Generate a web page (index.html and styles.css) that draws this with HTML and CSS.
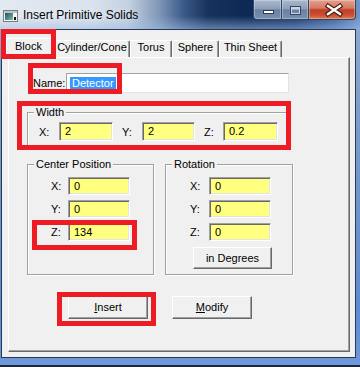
FILE: index.html
```html
<!DOCTYPE html>
<html>
<head>
<meta charset="utf-8">
<title>Insert Primitive Solids</title>
<link rel="stylesheet" href="styles.css">
</head>
<body>
<div class="window">
  <div class="titlebar">
    <svg class="app-icon" width="15" height="12" viewBox="0 0 15 12">
      <defs>
        <linearGradient id="ig" x1="0" y1="0" x2="1" y2="1">
          <stop offset="0" stop-color="#1f4f66"/>
          <stop offset="1" stop-color="#7fc0a2"/>
        </linearGradient>
      </defs>
      <rect x="0.5" y="0.5" width="14" height="11" fill="#f6f6f6" stroke="#7c7c7c"/>
      <rect x="1" y="1" width="13" height="2" fill="#b9c6d5"/>
      <rect x="2" y="3" width="8" height="7" fill="url(#ig)"/>
      <rect x="11" y="7" width="2" height="3" fill="#111"/>
    </svg>
    <span class="title">Insert Primitive Solids</span>
    <div class="caption">
      <div class="cbtn min">
        <svg viewBox="0 0 27 19" width="27" height="19"><rect x="9.5" y="10.5" width="10" height="3" fill="#fff" stroke="#2b3a52"/></svg>
      </div>
      <div class="cbtn max">
        <svg viewBox="0 0 26 19" width="26" height="19">
          <rect x="8.5" y="6.5" width="10" height="8" fill="none" stroke="#34475f"/>
          <rect x="9.5" y="7.5" width="8" height="6" fill="none" stroke="#cbd4e1"/>
          <rect x="10" y="8" width="7" height="1.5" fill="#cbd4e1"/>
        </svg>
      </div>
      <div class="cbtn close">
        <svg viewBox="0 0 46 19" width="46" height="19">
          <path d="M19 6 L31 14 M31 6 L19 14" stroke="#4a1a12" stroke-width="4.6" stroke-linecap="square" fill="none"/>
          <path d="M19 6 L31 14 M31 6 L19 14" stroke="#fff" stroke-width="2.4" stroke-linecap="square" fill="none"/>
        </svg>
      </div>
    </div>
  </div>
  <div class="frame">
    <div class="client">
      <div class="tabs">
        <div class="tab sel mark mark-tab">Block</div>
        <div class="tab t-cyl">Cylinder/Cone</div>
        <div class="tab t-torus">Torus</div>
        <div class="tab t-sphere">Sphere</div>
        <div class="tab t-thin">Thin Sheet</div>
      </div>
      <div class="panel">
        <div class="namerow mark mark-name">
          <span class="name-label">Name:</span>
          <span class="textbox"><span class="hl">Detector</span></span>
        </div>

        <div class="group group-width mark mark-width">
          <span class="group-title">Width</span>
          <div class="wrow">
            <span class="wlbl wl-x">X:</span><span class="field wf-x">2</span>
            <span class="wlbl wl-y">Y:</span><span class="field wf-y">2</span>
            <span class="wlbl wl-z">Z:</span><span class="field wf-z">0.2</span>
          </div>
        </div>

        <div class="grow">
          <div class="group group-center">
            <span class="group-title">Center Position</span>
            <div class="rows">
              <div class="crow"><span class="clbl">X:</span><span class="field pf">0</span></div>
              <div class="crow"><span class="clbl">Y:</span><span class="field pf">0</span></div>
              <div class="crow mark mark-z"><span class="clbl">Z:</span><span class="field pf">134</span></div>
            </div>
          </div>
          <div class="group group-rot">
            <span class="group-title">Rotation</span>
            <div class="rows">
              <div class="rrow"><span class="rlbl">X:</span><span class="field pf">0</span></div>
              <div class="rrow"><span class="rlbl">Y:</span><span class="field pf">0</span></div>
              <div class="rrow"><span class="rlbl">Z:</span><span class="field pf">0</span></div>
            </div>
            <div class="btn btn-deg">in Degrees</div>
          </div>
        </div>

        <div class="actions">
          <div class="btn btn-main mark mark-insert"><span><u>I</u>nsert</span></div>
          <div class="btn btn-main"><span><u>M</u>odify</span></div>
        </div>
      </div>
    </div>
  </div>
</div>
</body>
</html>
```
FILE: styles.css
```css
*,
*::before,
*::after {
  box-sizing: border-box;
}

html, body {
  margin: 0;
  padding: 0;
}

body {
  width: 360px;
  height: 367px;
  overflow: hidden;
  background: #1b2433;
  font-family: "Liberation Sans", Arial, sans-serif;
  font-size: 11px;
  color: #000;
}

/* ---------- window frame ---------- */
.window {
  width: 360px;
  height: 367px;
  display: flex;
  flex-direction: column;
  border-bottom: 2px solid #1c2738;
  background: linear-gradient(to bottom, #93aacb 0%, #7c9bc9 35%, #5f8bd0 85%, #6f99da 100%);
}

.titlebar {
  height: 29px;
  flex: none;
  display: flex;
  align-items: flex-start;
  background:
    linear-gradient(to bottom, rgba(160, 188, 225, 0) 55%, rgba(160, 188, 225, 0.55) 100%),
    linear-gradient(to right, #e3e9f1 0px, #dbe3ed 90px, #c4d1e1 128px, #8299b9 158px, #3b5987 184px, #17325d 208px, #0d2955 245px, #13336a 295px, #3d62a0 335px, #7195cb 360px);
}

.app-icon {
  flex: none;
  margin: 10px 0 0 3px;
}

.title {
  margin: 8px 0 0 5px;
  font-size: 12px;
  line-height: 14px;
  white-space: nowrap;
  text-shadow: 0 0 6px rgba(255, 255, 255, 0.6);
}

.caption {
  margin-left: auto;
  margin-right: 4px;
  display: flex;
  height: 20px;
}

.cbtn {
  height: 20px;
  border: 1px solid #33465f;
  border-top: 0;
  box-shadow: inset 0 0 0 1px rgba(255, 255, 255, 0.28);
}

.cbtn svg {
  display: block;
}

.cbtn + .cbtn {
  margin-left: -1px;
}

.min {
  width: 29px;
  border-bottom-left-radius: 4px;
  background: linear-gradient(to bottom, #a9b8cd 0%, #8d9fb9 45%, #6b81a3 52%, #7990b2 100%);
}

.max {
  width: 28px;
  background: linear-gradient(to bottom, #a9b8cd 0%, #8d9fb9 45%, #6b81a3 52%, #7990b2 100%);
}

.close {
  width: 48px;
  border-bottom-right-radius: 4px;
  background: linear-gradient(to bottom, #e4a08f 0%, #d57a64 42%, #c13f25 52%, #cc4d30 78%, #e07a55 100%);
}

.frame {
  flex: 1;
  display: flex;
  padding: 0 4px 7px 1px;
}

.client {
  flex: 1;
  display: flex;
  flex-direction: column;
  border: 1px solid #263a55;
  background: #f0f0f0;
}

/* ---------- tabs ---------- */
.tabs {
  height: 27px;
  flex: none;
  display: flex;
  align-items: flex-end;
  padding-left: 6px;
}

.tab {
  height: 17px;
  border-top: 1px solid #fff;
  border-left: 1px solid #fff;
  border-right: 1px solid #696969;
  border-radius: 2px 2px 0 0;
  box-shadow: inset -1px 0 0 #a0a0a0;
  background: #f0f0f0;
  line-height: 13px;
  text-align: center;
  white-space: nowrap;
}

.tab.sel {
  width: 50px;
  height: 20px;
  margin: 0 -2px -1px -2px;
  padding: 1px 0 0 8px;
  text-align: left;
  z-index: 2;
}

.t-cyl { width: 76px; }
.t-torus { width: 42px; }
.t-sphere { width: 47px; }
.t-thin { width: 63px; }

/* ---------- panel ---------- */
.panel {
  flex: 1;
  margin: 0 5px 5px 6px;
  padding-top: 15px;
  display: flex;
  flex-direction: column;
  align-items: flex-start;
  border-top: 1px solid #fff;
  border-left: 1px solid #fff;
  border-right: 1px solid #696969;
  border-bottom: 1px solid #696969;
  box-shadow: inset -1px -1px 0 #a0a0a0;
  background: #f0f0f0;
}

.namerow {
  display: flex;
  align-items: center;
  height: 20px;
  margin-left: 24px;
}

.name-label {
  width: 33px;
  white-space: nowrap;
}

.textbox {
  width: 223px;
  height: 20px;
  display: flex;
  align-items: center;
  padding-left: 3px;
  background: #fff;
  border: 1px solid;
  border-color: #a3a3a3 #e3e3e3 #e3e3e3 #a3a3a3;
}

.hl {
  background: #3399ff;
  color: #fff;
  line-height: 13px;
  padding: 0 2px;
}

/* group boxes */
.group {
  border: 1px solid #a0a0a0;
  box-shadow: inset 1px 1px 0 #fff, 1px 1px 0 #fff;
}

.group-title {
  display: block;
  width: fit-content;
  margin: -7px 0 0 6px;
  padding: 0 2px;
  line-height: 13px;
  background: #f0f0f0;
  white-space: nowrap;
}

.group-width {
  width: 261px;
  margin: 19px 0 0 18px;
  padding-bottom: 4px;
}

.wrow {
  display: flex;
  align-items: center;
  height: 19px;
  margin-top: 3px;
  padding-left: 11px;
}

.wlbl {
  white-space: nowrap;
}

.wl-x { width: 20px; }
.wl-y { width: 20px; margin-left: 9px; }
.wl-z { width: 19px; margin-left: 9px; }

.field {
  display: flex;
  align-items: center;
  height: 19px;
  padding-left: 5px;
  line-height: 13px;
  background: #ffff80;
  border: 1px solid;
  border-color: #a0a0a0 #fff #fff #a0a0a0;
  box-shadow: inset 1px 1px 0 #696969, inset -1px -1px 0 #e3e3e3;
  white-space: nowrap;
}

.wf-x { width: 54px; }
.wf-y { width: 53px; }
.wf-z { width: 55px; }

.grow {
  display: flex;
  gap: 11px;
  margin: 18px 0 0 18px;
}

.group-center {
  width: 127px;
  padding-bottom: 5px;
}

.group-rot {
  width: 128px;
  padding-bottom: 5px;
}

.rows {
  display: flex;
  flex-direction: column;
  gap: 5px;
  margin-top: 6px;
}

.crow,
.rrow {
  display: flex;
  align-items: center;
  height: 18px;
}

.crow { padding-left: 23px; }
.rrow { padding-left: 24px; }

.clbl { width: 17px; }
.rlbl { width: 19px; }

.pf {
  width: 62px;
  height: 18px;
}

/* buttons */
.btn {
  display: flex;
  align-items: center;
  justify-content: center;
  background: #f0f0f0;
  border-top: 1px solid #fff;
  border-left: 1px solid #fff;
  border-right: 1px solid #696969;
  border-bottom: 1px solid #696969;
  box-shadow: inset -1px -1px 0 #a0a0a0;
  line-height: 13px;
  white-space: nowrap;
}

.btn-deg {
  width: 79px;
  height: 22px;
  margin: 6px 0 0 27px;
}

.actions {
  display: flex;
  gap: 24px;
  margin: 21px 0 0 59px;
}

.btn-main {
  width: 80px;
  height: 23px;
}

/* ---------- red annotation boxes ---------- */
.mark {
  position: relative;
}

.mark::after {
  content: "";
  position: absolute;
  border: 5px solid #ed1c24;
  z-index: 10;
  pointer-events: none;
}

.mark-tab::after { left: -6px; top: -10px; width: 55px; height: 30px; }
.mark-name::after { left: -5px; top: -10px; width: 94px; height: 31px; }
.mark-width::after { left: -11px; top: -12px; width: 274px; height: 49px; }
.mark-z::after { left: 4px; top: -3px; width: 105px; height: 30px; }
.mark-insert::after { left: -12px; top: -5px; width: 99px; height: 34px; }
```
